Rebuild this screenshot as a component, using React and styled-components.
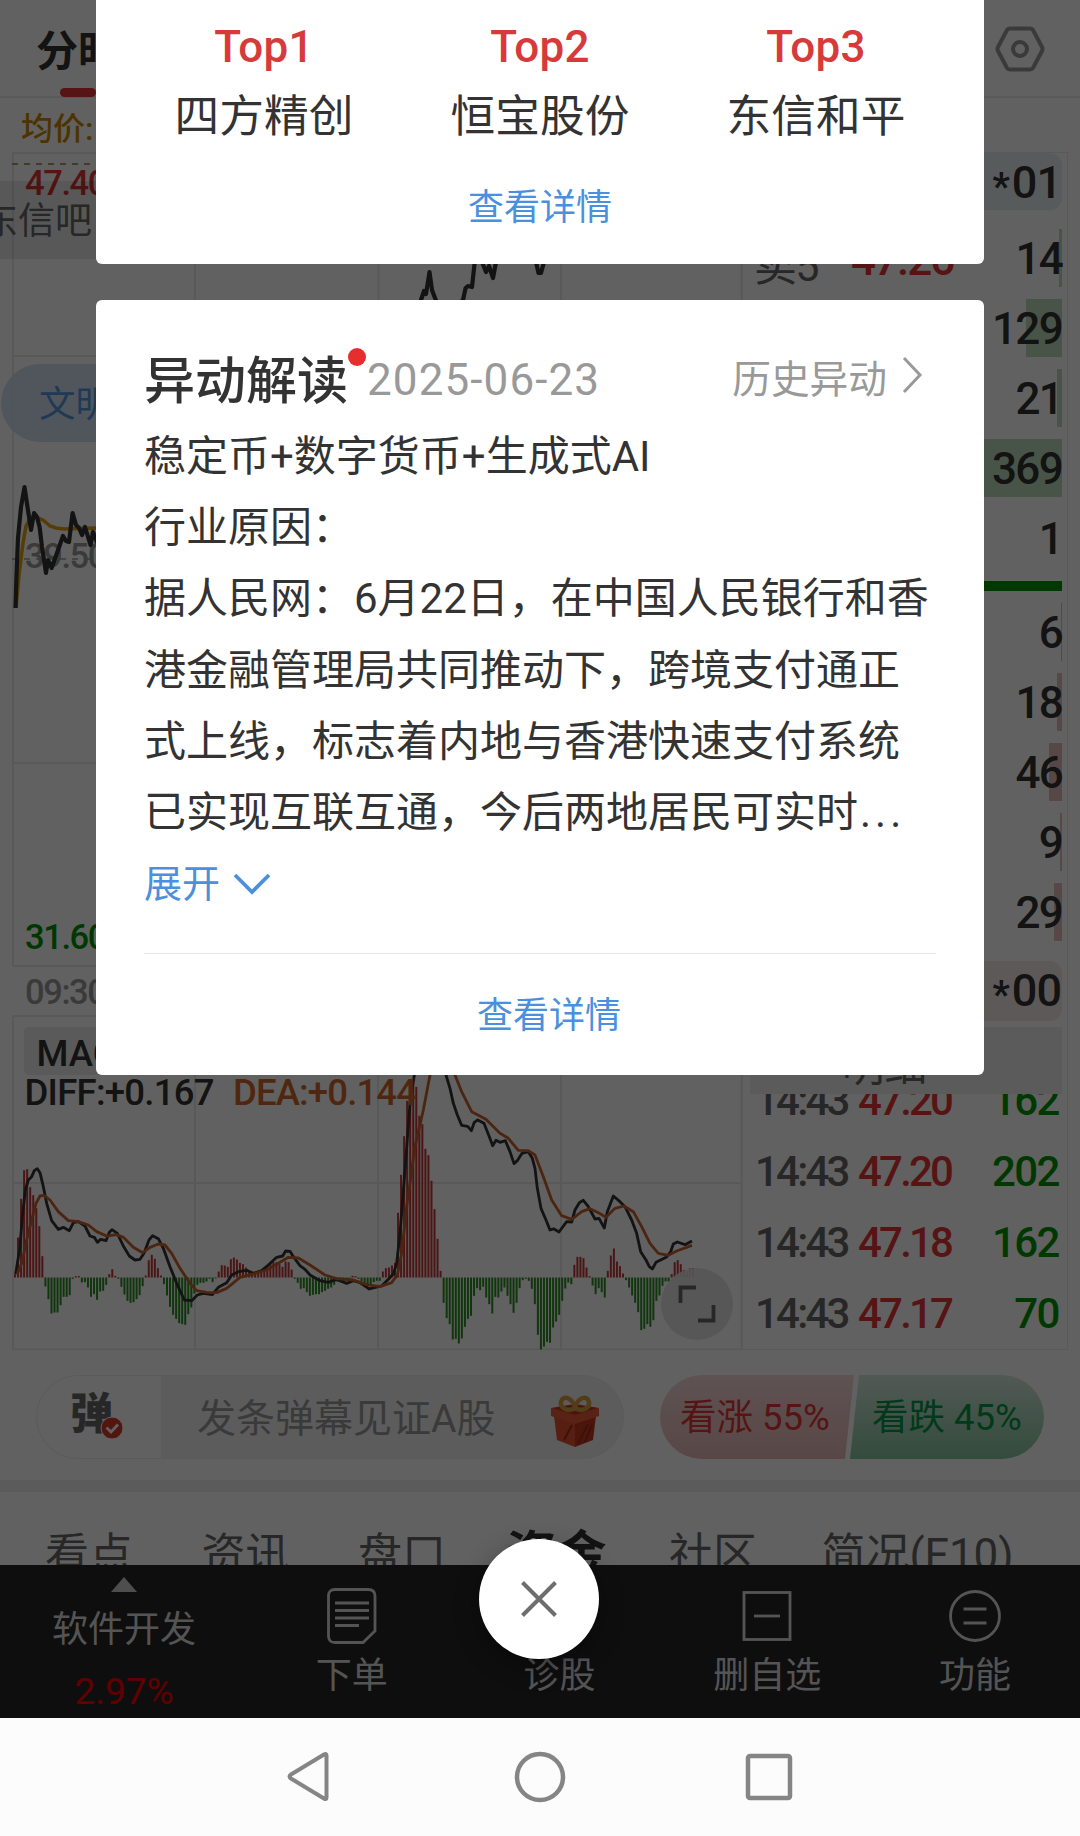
import React from "react";
import styled, { createGlobalStyle } from "styled-components";

const RED = "#e53535";
const GREEN = "#009600";
const BLUE = "#4a90de";

const macdBars = [
  10, 120, 236, 322, 325, 271, 247, 208, 154, 64, -27, -65, -108, -105, -105, -83, -58, -58, -53, -4,
  4, 4, -15, -14, -30, -58, -50, -67, -42, -40, -22, 10, 25, 5, -4, -28, -51, -70, -76, -74,
  -65, -53, -26, 6, 52, 68, 56, 28, 6, -20, -54, -88, -112, -124, -137, -140, -142, -110, -90, -48,
  -22, -16, -16, -12, -4, -14, -3, 18, 37, 36, 32, 55, 60, 54, 44, 40, 30, 20, 14, 10,
  16, 20, 28, 32, 42, 46, 46, 40, 32, 48, 46, 24, -4, -16, -34, -32, -44, -55, -52, -50,
  -50, -44, -40, -34, -30, -22, -12, -14, -16, -10, -4, 5, 4, -4, -12, -18, -22, -24, -14, -10,
  -10, 18, 28, 30, 36, 44, 194, 308, 424, 530, 560, 575, 572, 485, 460, 386, 367, 290, 205, 116,
  20, -76, -122, -140, -186, -184, -198, -183, -148, -124, -115, -55, -32, -38, -28, -60, -80, -108, -58, -60,
  -42, -30, -55, -80, -106, -76, -32, -8, -4, -10, -34, -80, -172, -216, -207, -193, -196, -150, -132, -112,
  -70, -33, -15, -20, 38, 62, 62, 58, 30, 4, -24, -50, -32, -44, -60, 20, 66, 87, 48, 34,
  12, -8, -30, -54, -76, -104, -158, -154, -140, -148, -128, -70, -54, -25, -12, -12, 10, 46, 52, 40,
  22, 16, 27, 28,
];

const diffLine =
  "47,822 60,740 67,650 76,570 85,540 95,530 103,512 112,506 120,518 130,560 140,610 155,662 175,688 190,682 208,692 220,668 235,665 255,678 270,708 283,712 292,727 302,718 318,722 328,697 336,689 352,700 370,738 388,768 405,780 420,778 432,760 447,720 458,707 475,716 490,745 510,800 530,850 553,900 575,902 592,885 610,880 637,884 655,862 680,848 695,825 715,815 740,811 760,820 785,812 805,795 830,772 848,768 857,753 870,754 880,770 900,797 915,808 930,825 960,842 985,847 1010,838 1040,850 1060,842 1080,848 1108,867 1145,858 1165,838 1180,822 1190,790 1200,700 1215,510 1230,310 1243,225 1262,120 1300,80 1325,160 1338,225 1350,265 1360,310 1372,345 1385,376 1403,379 1414,392 1423,367 1433,360 1452,370 1468,410 1478,437 1488,421 1500,427 1516,422 1530,455 1542,491 1552,482 1566,460 1585,455 1597,475 1605,505 1612,565 1623,625 1638,660 1650,690 1662,687 1677,696 1700,665 1715,666 1725,630 1738,608 1750,601 1765,620 1785,657 1797,655 1813,684 1822,635 1840,588 1860,605 1875,620 1895,660 1910,700 1922,755 1938,780 1948,800 1957,807 1968,787 2000,771 2012,755 2020,732 2032,726 2055,734 2076,723";

const deaLine =
  "52,822 65,790 80,720 95,660 108,610 120,588 132,586 150,600 175,635 205,662 235,665 265,675 290,695 320,708 350,704 370,712 400,742 428,758 450,742 475,732 495,735 515,760 540,805 570,850 590,872 620,877 650,878 680,865 720,832 760,822 800,810 835,790 865,772 895,774 930,795 975,825 1010,836 1060,840 1100,854 1140,860 1175,848 1192,825 1205,760 1220,620 1245,440 1270,330 1290,225 1310,160 1340,165 1365,225 1385,275 1415,335 1458,358 1500,400 1525,415 1555,451 1585,452 1605,465 1630,530 1655,600 1685,647 1715,658 1745,635 1770,626 1795,638 1818,652 1845,625 1872,618 1900,635 1925,680 1950,730 1975,760 2005,766 2030,753 2076,736";

const priceLine =
  "15.5,608 16.5,575 18,538 21,507 24.5,487 27.5,507 31,530 34,513 37,517 39.6,527 42,547 46,573 48,560 51.6,568 57,553 63,536 66,541 69,542 72.6,513 76,525 79,528 82,535 85,527 90.5,545 93,532 97,542 130,520 200,540 300,500 400,400 421,300 424,291 426,294 429.5,272 432,290 435,298 445,320 463,300 465.6,288 468,286 472,287 474.5,264 477,250 482,262 486,272 489,266 493,278 496,262 515,240 536,262 538.5,273 541,273 544,262";

const avgLine =
  "16,608 19,575 23,543 26,526 30,519 35,517 43,520 50,526 56,528 64,529 96,528 200,532";

const sellRows = [
  { label: "卖5", price: "47.26", volume: "14", bar: 3 },
  { volume: "129", bar: 36 },
  { volume: "21", bar: 5 },
  { volume: "369", bar: 110 },
  { volume: "1", bar: 0 },
];

const buyRows = [
  { volume: "6", bar: 1 },
  { volume: "18", bar: 5 },
  { volume: "46", bar: 13 },
  { volume: "9", bar: 2 },
  { volume: "29", bar: 8 },
];

const ticks = [
  { time: "14:43", price: "47.20", volume: "162" },
  { time: "14:43", price: "47.20", volume: "202" },
  { time: "14:43", price: "47.18", volume: "162" },
  { time: "14:43", price: "47.17", volume: "70" },
];

const topStocks = [
  { rank: "Top1", name: "四方精创" },
  { rank: "Top2", name: "恒宝股份" },
  { rank: "Top3", name: "东信和平" },
];

const reasonLines = [
  "稳定币+数字货币+生成式AI",
  "行业原因：",
  "据人民网：6月22日，在中国人民银行和香",
  "港金融管理局共同推动下，跨境支付通正",
  "式上线，标志着内地与香港快速支付系统",
];

const Chart = () => (
  <ChartSvg viewBox="12 152 731 1198">
    <g stroke="#e9e9e9" strokeWidth="2" fill="none">
      <path d="M13 966V153H743" />
      <path d="M13 356H743M13 763H743M13 966H743" />
      <path d="M195 153V966M378.500 153V966M561 153V966" />
      <path d="M13 1350V1016H743M13 1183H743M13 1349.500H743" />
      <path d="M195 1016V1350M378 1016V1350M561 1016V1350" />
      <path d="M742 153V1350" strokeWidth="3" />
    </g>
    <path d="M12 164H743" stroke="#b5996a" strokeWidth="2" strokeDasharray="6 6" />
    <path d="M12 559H743" stroke="#999" strokeWidth="1.500" strokeDasharray="6 6" />
    <ChartText x="25" y="195" fill={RED}>47.40</ChartText>
    <ChartText x="25" y="568" fill="#999">39.50</ChartText>
    <ChartText x="25" y="949" fill={GREEN}>31.60</ChartText>
    <ChartText x="25" y="1004" fill="#999">09:30</ChartText>
    <polyline points={avgLine} fill="none" stroke="#e0a010" strokeWidth="3.500" />
    <polyline points={priceLine} fill="none" stroke="#333" strokeWidth="4.200" strokeLinejoin="round" />

    <rect x="24" y="1027" width="150" height="48" rx="5" fill="#ececec" />
    {macdBars.map((h, i) => (
      <rect
        key={i}
        x={14 + i * 3.04}
        y={h > 0 ? 1277.5 - h / 3 : 1277.5}
        width="2"
        height={Math.abs(h) / 3}
        fill={h > 0 ? "#c83838" : "#2f8f26"}
      />
    ))}
    <g transform="translate(0 1000) scale(.33333)" fill="none" strokeWidth="8.500" strokeLinejoin="round">
      <polyline points={diffLine} stroke="#333" />
      <polyline points={deaLine} stroke="#c8622f" />
    </g>
    <MacdText x="36.500" y="1066" fill="#333">MACD</MacdText>
    <MacdText x="24.500" y="1104.500" fill="#333" textLength="190">DIFF:+0.167</MacdText>
    <MacdText x="233" y="1104.500" fill="#d0682f" textLength="184">DEA:+0.144</MacdText>

    <circle cx="697" cy="1304" r="36" fill="#e3e3e3" fillOpacity=".92" />
    <path
      d="M680.500 1303V1287.500H696M698 1320.500H713.500V1305"
      fill="none"
      stroke="#666"
      strokeWidth="3.800"
    />
  </ChartSvg>
);

const Gift = () => (
  <svg width="50" height="54" viewBox="0 0 50 54">
    <path d="M4 21L25 28V52L7 45Z" fill="#e2512f" />
    <path d="M46 21L25 28V52L43 45Z" fill="#c8391f" />
    <path d="M1 13L25 19 49 13V21L25 29 1 21Z" fill="#e85a38" />
    <path d="M1 13L25 9 49 13 25 20Z" fill="#c23a22" />
    <path d="M14 45L22 30M35 47L42 30M28 49L38 29" stroke="#a42c1a" strokeWidth="2" />
    <path
      d="M25 13C19 17 10 14 11 7C13 -1 23 3 25 13C27 3 37 -1 39 7C40 14 31 17 25 13"
      fill="none"
      stroke="#d9a040"
      strokeWidth="4.500"
    />
  </svg>
);

const OrderIcon = () => (
  <svg width="50" height="56" viewBox="0 0 50 56" fill="none" stroke="#dedede" strokeWidth="2.800">
    <path d="M8 1.500H41Q48 1.500 48 8V43L36 54.500H8Q1.500 54.500 1.500 48V8Q1.500 1.500 8 1.500Z" />
    <path d="M8 15H42M8 22.500H42M8 30H42M8 37.500H32" />
  </svg>
);

const RemoveIcon = () => (
  <svg width="50" height="56" viewBox="0 0 50 56" fill="none" stroke="#dedede" strokeWidth="2.800">
    <rect x="2" y="4.500" width="46" height="47" />
    <path d="M12 28H38" />
  </svg>
);

const FunctionIcon = () => (
  <svg width="52" height="56" viewBox="0 0 52 56" fill="none" stroke="#dedede" strokeWidth="2.800">
    <circle cx="26" cy="28" r="24.500" />
    <path d="M14.500 21H37.500M14.500 35H37.500" />
  </svg>
);

const QuoteRow = ({ row, side }) => (
  <BookRow>
    <DepthBar $side={side} style={{ width: row.bar }} />
    {row.label && <BookLabel>{row.label}</BookLabel>}
    {row.price && <BookPrice>{row.price}</BookPrice>}
    <BookVolume>{row.volume}</BookVolume>
  </BookRow>
);

const App = () => (
  <Phone>
    <GlobalStyle />
    <Header>
      <PeriodTab>分时</PeriodTab>
      <svg width="50" height="48" viewBox="0 0 50 48" fill="none" stroke="#999">
        <path
          d="M15 3.500H35Q37 3.500 38 5L47 22Q48 24 47 26L38 43Q37 44.500 35 44.500H15Q13 44.500 12 43L3 26Q2 24 3 22L12 5Q13 3.500 15 3.500Z"
          strokeWidth="4"
        />
        <circle cx="25" cy="24" r="7" strokeWidth="4" />
      </svg>
    </Header>
    <AverageRow>均价:</AverageRow>

    <Main>
      <Chart />
      <OrderBook>
        <TotalRow $side="sell"><Star>*</Star>01</TotalRow>
        <BookRows>
          {sellRows.map((row) => <QuoteRow key={row.volume} row={row} side="sell" />)}
        </BookRows>
        <Ratio />
        <BookRows>
          {buyRows.map((row) => <QuoteRow key={row.volume} row={row} side="buy" />)}
        </BookRows>
        <TotalRow $side="buy"><Star>*</Star>00</TotalRow>
        <DetailTab>明细</DetailTab>
        <TickList>
          {ticks.map((tick, i) => (
            <Tick key={i}>
              <TickTime>{tick.time}</TickTime>
              <TickPrice>{tick.price}</TickPrice>
              <TickVolume>{tick.volume}</TickVolume>
            </Tick>
          ))}
        </TickList>
      </OrderBook>
    </Main>

    <BarrageRow>
      <BarrageInput>
        <BarrageSwitch>
          弹
          <Checked width="24" height="24" viewBox="0 0 24 24">
            <circle cx="12" cy="12" r="11" fill="#d8382c" stroke="#fff" strokeWidth="1" />
            <path d="M6.500 11.500L11 16 18 8.500" fill="none" stroke="#fff" strokeWidth="2.800" />
          </Checked>
        </BarrageSwitch>
        <Placeholder>发条弹幕见证A股</Placeholder>
        <Gift />
      </BarrageInput>
      <Votes>
        <VoteUp>看涨 55%</VoteUp>
        <VoteDown>看跌 45%</VoteDown>
      </Votes>
    </BarrageRow>

    <Tabs>
      <Tab>看点</Tab>
      <Tab>资讯</Tab>
      <Tab>盘口</Tab>
      <Tab $active>资金</Tab>
      <Tab>社区</Tab>
      <Tab>简况(F10)</Tab>
    </Tabs>

    <BottomBar>
      <Sector>
        <svg width="26" height="15" viewBox="0 0 26 15">
          <path d="M13 0L26 15H0Z" fill="#ccc" />
        </svg>
        <span>软件开发</span>
        <SectorChange>2.97%</SectorChange>
      </Sector>
      <Action><OrderIcon />下单</Action>
      <Action><IconSpace />诊股</Action>
      <Action><RemoveIcon />删自选</Action>
      <Action><FunctionIcon />功能</Action>
    </BottomBar>

    <Ticker>东信吧</Ticker>
    <TopicPill>文明</TopicPill>
    <Mask />

    <SystemNav>
      <svg width="50" height="54" viewBox="0 0 50 54" fill="none" stroke="#858585" strokeWidth="4">
        <path d="M41.500 5.500V47.500Q41.500 50 39 48.500L6 28.500Q3 26.500 6 24.500L39 4.500Q41.500 3 41.500 5.500Z" />
      </svg>
      <svg width="54" height="54" viewBox="0 0 54 54" fill="none" stroke="#858585" strokeWidth="4.500">
        <circle cx="27" cy="27" r="23" />
      </svg>
      <svg width="50" height="54" viewBox="0 0 50 54" fill="none" stroke="#858585" strokeWidth="4.500">
        <rect x="3" y="6" width="42" height="42" rx="2" />
      </svg>
    </SystemNav>

    <Dialogs>
      <TopCard>
        <StockList>
          {topStocks.map((stock) => (
            <Stock key={stock.rank}>
              <Rank>{stock.rank}</Rank>
              <StockName>{stock.name}</StockName>
            </Stock>
          ))}
        </StockList>
        <DetailLink>查看详情</DetailLink>
      </TopCard>
      <ReasonCard>
        <ReasonHead>
          <Title>异动解读<UnreadDot /></Title>
          <ReasonDate>2025-06-23</ReasonDate>
          <HistoryLink>历史异动</HistoryLink>
          <svg width="22" height="38" viewBox="0 0 22 38" fill="none" stroke="#999" strokeWidth="3">
            <path d="M3 2L19 19 3 36" />
          </svg>
        </ReasonHead>
        <ReasonBody>
          {reasonLines.map((line) => <ReasonLine key={line}>{line}</ReasonLine>)}
          <ReasonLine>已实现互联互通，今后两地居民可实时<Ellipsis>...</Ellipsis></ReasonLine>
        </ReasonBody>
        <Expand>
          <span>展开</span>
          <svg width="38" height="24" viewBox="0 0 38 24" fill="none" stroke={BLUE} strokeWidth="3.800">
            <path d="M2 3L19 20 36 3" />
          </svg>
        </Expand>
        <ReasonFooter>查看详情</ReasonFooter>
      </ReasonCard>
    </Dialogs>

    <CloseButton>
      <svg width="38" height="38" viewBox="0 0 38 38" fill="none" stroke="#6e6e6e" strokeWidth="4">
        <path d="M2.500 2.500L35.500 35.500M35.500 2.500L2.500 35.500" />
      </svg>
    </CloseButton>
  </Phone>
);

const GlobalStyle = createGlobalStyle`
  * {
    box-sizing: border-box;
  }
  body {
    margin: 0;
    font-family: Roboto, "Noto Sans CJK SC", sans-serif;
    color: #333;
  }
  svg {
    display: block;
    flex: none;
  }
`;

const Phone = styled.div`
  position: relative;
  display: flex;
  flex-direction: column;
  width: 1080px;
  height: 1836px;
  overflow: hidden;
  background: #fff;
  white-space: nowrap;
`;

const Header = styled.header`
  display: flex;
  justify-content: space-between;
  align-items: flex-start;
  height: 98px;
  padding: 25px 35px 0 36px;
  border-bottom: 2px solid #ececec;
`;

const PeriodTab = styled.div`
  position: relative;
  font-size: 42px;
  line-height: 54px;
  font-weight: 700;
  &::after {
    content: "";
    position: absolute;
    left: 24px;
    top: 63px;
    width: 36px;
    height: 9px;
    border-radius: 5px;
    background: ${RED};
  }
`;

const AverageRow = styled.div`
  height: 54px;
  padding-left: 21px;
  font-size: 32px;
  line-height: 62px;
  font-weight: 500;
  color: #c88a00;
`;

const Main = styled.main`
  display: flex;
  height: 1198px;
  padding-left: 12px;
`;

const ChartSvg = styled.svg`
  width: 731px;
  height: 1198px;
`;

const ChartText = styled.text`
  font-size: 34.5px;
  font-weight: 500;
  letter-spacing: -1.4px;
`;

const MacdText = styled.text`
  font-size: 36.5px;
  font-weight: 500;
`;

const OrderBook = styled.section`
  display: flex;
  flex-direction: column;
  width: 325px;
  padding: 0 5px 0 7px;
  border: 1px solid #e9e9e9;
  border-left: 0;
`;

const TotalRow = styled.div`
  height: ${(p) => (p.$side === "sell" ? 57 : 60)}px;
  margin: ${(p) => (p.$side === "sell" ? "0 0 19px" : "20px 0 6px")};
  padding-right: 1px;
  border-radius: 12px;
  background: ${(p) => (p.$side === "sell" ? "#e6f0ef" : "#f8eaea")};
  font-size: 45px;
  font-weight: 500;
  line-height: 60px;
  letter-spacing: -1px;
  text-align: right;
`;

const Star = styled.span`
  position: relative;
  top: 2px;
  margin-right: 3px;
  font-size: 38px;
  font-weight: 700;
`;

const BookRows = styled.div`
  display: flex;
  flex-direction: column;
  gap: 12px;
`;

const BookRow = styled.div`
  position: relative;
  display: flex;
  align-items: center;
  height: 58px;
  padding-top: 1px;
  font-size: 44px;
  font-weight: 500;
  letter-spacing: -1.7px;
`;

const DepthBar = styled.div`
  position: absolute;
  right: 0;
  top: 0;
  height: 58px;
  background: ${(p) => (p.$side === "sell" ? "#bbdcba" : "#e8bcbc")};
`;

const BookLabel = styled.span`
  width: 101px;
  padding: 6px 0 0 4px;
  font-size: 43px;
  font-weight: 400;
  color: #666;
`;

const BookPrice = styled.span`
  padding-top: 2px;
  color: ${RED};
  letter-spacing: -2px;
`;

const BookVolume = styled.span`
  position: relative;
  margin-left: auto;
`;

const Ratio = styled.div`
  height: 10px;
  margin: 14px 0 12px;
  background: ${GREEN};
  flex: none;
`;

const DetailTab = styled.div`
  flex: none;
  height: 67px;
  padding-left: 92px;
  background: #efefef;
  font-size: 42.5px;
  line-height: 79px;
  color: #666;
`;

const TickList = styled.div`
  flex: 1;
  display: flex;
  flex-direction: column;
  justify-content: flex-end;
  overflow: hidden;
`;

const Tick = styled.div`
  flex: none;
  display: flex;
  align-items: center;
  height: 71px;
  font-size: 42px;
  font-weight: 500;
  letter-spacing: -2.8px;
`;

const TickTime = styled.span`
  width: 108px;
  padding-left: 5px;
  color: #666;
`;

const TickPrice = styled.span`
  color: ${RED};
`;

const TickVolume = styled.span`
  margin-left: auto;
  padding-right: 3px;
  letter-spacing: -1.5px;
  color: ${GREEN};
`;

const BarrageRow = styled.div`
  display: flex;
  justify-content: space-between;
  height: 142px;
  padding: 25px 36px 33px;
  border-bottom: 12px solid #efefef;
`;

const BarrageInput = styled.div`
  display: flex;
  align-items: center;
  width: 588px;
  height: 84px;
  padding-right: 23px;
  border: 1px solid #ececec;
  border-radius: 42px;
  overflow: hidden;
  background: #f1f1f1;
`;

const BarrageSwitch = styled.div`
  position: relative;
  width: 124px;
  height: 84px;
  padding-left: 33px;
  background: #fff;
  font-size: 43px;
  line-height: 78px;
  font-weight: 900;
  color: #666;
`;

const Checked = styled.svg`
  position: absolute;
  left: 63px;
  top: 41px;
`;

const Placeholder = styled.span`
  flex: 1;
  padding-left: 36px;
  font-size: 39px;
  line-height: 84px;
  padding-top: 4px;
  color: #999;
  & + svg {
    margin-top: 10px;
  }
`;

const Votes = styled.div`
  display: flex;
  width: 384px;
  height: 84px;
  border-radius: 42px;
  overflow: hidden;
`;

const Vote = styled.div`
  height: 84px;
  font-size: 36.5px;
  line-height: 86px;
`;

const VoteUp = styled(Vote)`
  width: 194px;
  padding-left: 20px;
  background: linear-gradient(#f6d8d8, #eababa);
  clip-path: polygon(0 0, 100% 0, 185px 100%, 0 100%);
  color: ${RED};
`;

const VoteDown = styled(Vote)`
  width: 194px;
  margin-left: -4px;
  padding-left: 22px;
  background: linear-gradient(#d6eadd, #87c7a2);
  clip-path: polygon(9px 0, 100% 0, 100% 100%, 0 100%);
  color: #009846;
`;

const Tabs = styled.nav`
  display: flex;
  height: 73px;
  padding: 30px 0 0 45px;
  gap: 68.5px;
  overflow: hidden;
`;

const Tab = styled.span`
  font-size: ${(p) => (p.$active ? 50 : 44)}px;
  font-weight: ${(p) => (p.$active ? 700 : 400)};
  line-height: 66px;
  color: ${(p) => (p.$active ? "#333" : "#666")};
  margin-left: ${(p) => (p.$active ? -8 : 0)}px;
  margin-right: ${(p) => (p.$active ? -6 : 0)}px;
  &:last-child {
    margin-left: -4px;
  }
`;

const BottomBar = styled.footer`
  display: flex;
  height: 153px;
  background: #262626;
  font-size: 36px;
  color: #ddd;
`;

const Sector = styled.div`
  display: flex;
  flex-direction: column;
  align-items: center;
  width: 248px;
  padding-top: 12px;
  line-height: 61px;
  span {
    margin-top: 8px;
  }
`;

const SectorChange = styled.div`
  font-size: 37px;
  color: #f00;
`;

const Action = styled.div`
  display: flex;
  flex-direction: column;
  align-items: center;
  width: 207.75px;
  padding-top: 23px;
  line-height: 64px;
`;

const IconSpace = styled.div`
  height: 56px;
`;

const Ticker = styled.div`
  position: absolute;
  left: 0;
  top: 181px;
  width: 300px;
  height: 78px;
  background: rgba(0, 0, 0, 0.09);
  font-size: 37px;
  line-height: 82px;
  text-indent: -19px;
  color: #666;
`;

const TopicPill = styled.div`
  position: absolute;
  left: 1px;
  top: 364px;
  width: 260px;
  height: 78px;
  padding-left: 38px;
  border-radius: 39px;
  background: #cfe0ee;
  opacity: 0.93;
  font-size: 36.5px;
  line-height: 82px;
  color: #4a90de;
`;

const Mask = styled.div`
  position: absolute;
  left: 0;
  top: 0;
  width: 1080px;
  height: 1718px;
  background: rgba(0, 0, 0, 0.62);
`;

const SystemNav = styled.div`
  display: flex;
  justify-content: center;
  align-items: center;
  gap: 178px;
  height: 118px;
  background: #fcfcfc;
`;

const Dialogs = styled.div`
  position: absolute;
  left: 96px;
  top: 0;
  width: 888px;
  display: flex;
  flex-direction: column;
  gap: 36px;
`;

const TopCard = styled.section`
  height: 264px;
  padding: 14px 30px 0;
  border-radius: 0 0 6px 6px;
  background: #fff;
`;

const StockList = styled.div`
  display: flex;
`;

const Stock = styled.div`
  flex: 1;
  display: flex;
  flex-direction: column;
  align-items: center;
`;

const Rank = styled.span`
  font-size: 44px;
  line-height: 66px;
  font-weight: 500;
  letter-spacing: 0.2px;
  color: #d73a3a;
`;

const StockName = styled.span`
  font-size: 44.7px;
  line-height: 74px;
`;

const DetailLink = styled.div`
  font-size: 36px;
  line-height: 108px;
  text-align: center;
  color: ${BLUE};
`;

const ReasonCard = styled.section`
  height: 775px;
  padding: 40px 48px 0;
  border-radius: 6px;
  background: #fff;
`;

const ReasonHead = styled.div`
  display: flex;
  align-items: center;
  height: 76px;
`;

const Title = styled.h2`
  position: relative;
  margin: 0;
  padding-top: 8px;
  font-size: 51px;
  line-height: 76px;
  font-weight: 500;
`;

const UnreadDot = styled.i`
  position: absolute;
  right: -18px;
  top: 12px;
  width: 18px;
  height: 18px;
  border-radius: 50%;
  background: #e62e2e;
`;

const ReasonDate = styled.span`
  padding: 4px 0 0 19px;
  font-size: 44px;
  letter-spacing: 1.1px;
  color: #999;
`;

const HistoryLink = styled.span`
  margin-left: auto;
  margin-right: 14px;
  padding-bottom: 5px;
  font-size: 38.7px;
  color: #999;
  & + svg {
    margin: 0 13px 6px 0;
  }
`;

const ReasonBody = styled.div`
  padding-top: 5px;
`;

const ReasonLine = styled.p`
  margin: 0;
  font-size: 42px;
  line-height: 71.2px;
`;

const Ellipsis = styled.span`
  margin-left: 2px;
  letter-spacing: 4px;
`;

const Expand = styled.div`
  display: flex;
  align-items: center;
  gap: 13px;
  height: 71px;
  font-size: 38px;
  color: ${BLUE};
  span {
    padding-bottom: 6px;
  }
`;

const ReasonFooter = styled.div`
  margin-top: 34px;
  padding-left: 18px;
  border-top: 1px solid #e8e8e8;
  font-size: 36px;
  line-height: 124px;
  text-align: center;
  color: ${BLUE};
`;

const CloseButton = styled.button`
  position: absolute;
  left: 479px;
  top: 1539px;
  width: 120px;
  height: 120px;
  display: flex;
  align-items: center;
  justify-content: center;
  padding: 0;
  border: 0;
  border-radius: 50%;
  background: #fff;
  box-shadow: 0 8px 24px rgba(0, 0, 0, 0.35);
`;

export default App;
